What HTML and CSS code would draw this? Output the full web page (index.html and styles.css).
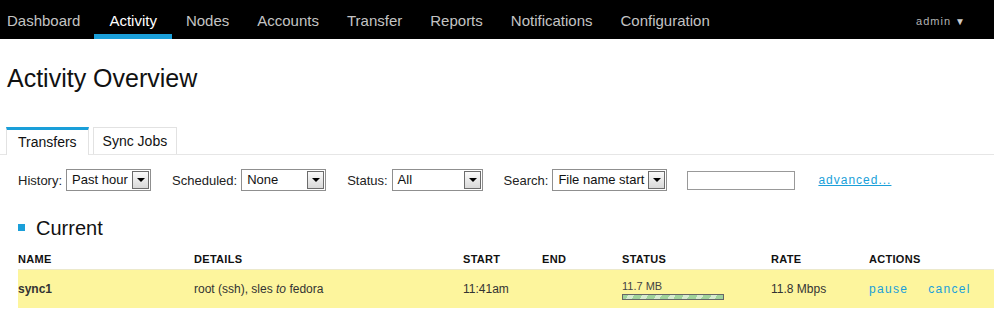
FILE: index.html
```html
<!DOCTYPE html>
<html lang="en">
<head>
  <meta charset="UTF-8" />
  <meta name="viewport" content="width=device-width, initial-scale=1.0"/>
  <title>Activity Overview</title>
  <link rel="stylesheet" href="styles.css">
</head>
<body>

  <div class="topbar">
    <ul class="nav">
      <li><a href="#">Dashboard</a></li>
      <li class="active"><a href="#">Activity</a></li>
      <li><a href="#">Nodes</a></li>
      <li><a href="#">Accounts</a></li>
      <li><a href="#">Transfer</a></li>
      <li><a href="#">Reports</a></li>
      <li><a href="#">Notifications</a></li>
      <li><a href="#">Configuration</a></li>
    </ul>
    <div class="user">admin <span class="caret">▼</span></div>
  </div>

  <h1>Activity Overview</h1>

  <ul class="tabs">
    <li class="active">Transfers</li>
    <li>Sync Jobs</li>
  </ul>

  <div class="filters">
    <label>History:</label>
    <span class="select w-history">Past hour<span class="arrow"></span></span>
    <label>Scheduled:</label>
    <span class="select w-sched">None<span class="arrow"></span></span>
    <label>Status:</label>
    <span class="select w-status">All<span class="arrow"></span></span>
    <label>Search:</label>
    <span class="select w-search">File name start<span class="arrow"></span></span>
    <input class="search-box" type="text">
    <a class="advanced" href="#">advanced...</a>
  </div>

  <h2 class="section-title"><span class="square"></span>Current</h2>

  <table class="transfers">
    <thead>
      <tr>
        <th class="c-name">Name</th>
        <th class="c-details">Details</th>
        <th class="c-start">Start</th>
        <th class="c-end">End</th>
        <th class="c-status">Status</th>
        <th class="c-rate">Rate</th>
        <th class="c-actions">Actions</th>
      </tr>
    </thead>
    <tbody>
      <tr class="running">
        <td class="name">sync1</td>
        <td>root (ssh), sles <em>to</em> fedora</td>
        <td>11:41am</td>
        <td></td>
        <td>
          <div class="size">11.7 MB</div>
          <div class="progress"></div>
        </td>
        <td>11.8 Mbps</td>
        <td class="actions"><a href="#">pause</a><a href="#">cancel</a></td>
      </tr>
    </tbody>
  </table>

</body>
</html>
```

FILE: styles.css
```css
:root {
  --blue: #1a9fd9;
  --text: #222;
  --row: #fdf59d;
}

body {
  margin: 0;
  font-family: 'Liberation Sans', Arial, sans-serif;
  color: var(--text);
  background: #fff;
}

.topbar {
  display: flex;
  justify-content: space-between;
  align-items: center;
  height: 39px;
  background: #000;
}

.nav {
  display: flex;
  list-style: none;
  margin: 0 0 0 -7px;
  padding: 0;
  height: 39px;
}

.nav li {
  box-sizing: border-box;
  height: 39px;
  padding: 0 14px;
  border-bottom: 5px solid transparent;
}

.nav li.active {
  padding: 0 15px;
  border-bottom-color: var(--blue);
}

.nav a {
  display: block;
  line-height: 42px;
  font-size: 15px;
  color: #c4c4c4;
  text-decoration: none;
}

.nav li.active a {
  color: #fff;
}

.user {
  margin-right: 28px;
  padding-top: 2px;
  font-size: 11px;
  letter-spacing: 1px;
  color: #b4b4b4;
}

.user .caret {
  font-size: 10px;
  color: #ccc;
}

h1 {
  margin: 25px 0 0 7px;
  font-size: 25px;
  line-height: 28px;
  font-weight: normal;
  color: #111;
}

.tabs {
  display: flex;
  gap: 4px;
  list-style: none;
  margin: 35px 0 0;
  padding: 0 0 0 6px;
  border-bottom: 1px solid #e6e6e6;
}

.tabs li {
  margin-bottom: -1px;
  padding: 0 9px;
  height: 26px;
  line-height: 26px;
  font-size: 14px;
  color: #111;
  background: #fff;
  border: 1px solid #e2e2e2;
  border-bottom: none;
}

.tabs li.active {
  padding: 0 11px;
  height: 25px;
  border-top: 3px solid var(--blue);
  line-height: 25px;
}

.filters {
  display: flex;
  align-items: center;
  margin: 14px 0 0 18px;
  font-size: 13px;
}

.filters label {
  margin-right: 4px;
}

.select {
  position: relative;
  box-sizing: border-box;
  height: 22px;
  line-height: 19px;
  padding-left: 5px;
  margin-right: 21px;
  border: 1px solid #8f8f8f;
  font-size: 13px;
  color: #111;
  background: #fff;
}

.select .arrow {
  position: absolute;
  top: 1px;
  right: 1px;
  width: 15px;
  height: 16px;
  border: 1px solid #6c6c6c;
  background: linear-gradient(#fafafa, #d9d9d9);
}

.select .arrow::after {
  content: '';
  position: absolute;
  left: 4px;
  top: 6px;
  border-left: 4px solid transparent;
  border-right: 4px solid transparent;
  border-top: 4px solid #000;
}

.w-history { width: 85px; }
.w-sched { width: 85px; }
.w-status { width: 91px; }
.w-search { width: 115px; margin-right: 20px; }

.search-box {
  box-sizing: border-box;
  width: 108px;
  height: 19px;
  margin: 0 23px 0 0;
  padding: 0 3px;
  border: 1px solid #999;
  font-family: inherit;
  font-size: 13px;
}

.advanced {
  font-size: 12px;
  letter-spacing: 1px;
  color: var(--blue);
}

.section-title {
  display: flex;
  align-items: center;
  margin: 26px 0 0 18px;
  font-size: 20px;
  line-height: 22px;
  font-weight: normal;
  color: #111;
}

.section-title .square {
  width: 7px;
  height: 7px;
  margin: 0 11px 1px 0;
  background: var(--blue);
}

.transfers {
  width: calc(100% - 18px);
  margin: 13px 0 0 18px;
  border-collapse: collapse;
  font-size: 12px;
}

.transfers th {
  padding: 0 0 4px;
  height: 13px;
  text-align: left;
  font-size: 11px;
  letter-spacing: 0.3px;
  text-transform: uppercase;
  color: #111;
  border-bottom: 1px solid #ece9cc;
}

.c-name { width: 176px; }
.c-details { width: 269px; }
.c-start { width: 79px; }
.c-end { width: 80px; }
.c-status { width: 149px; }
.c-rate { width: 98px; }

.transfers td {
  height: 38px;
  padding: 0;
  color: #333;
  vertical-align: middle;
}

.transfers tr.running td {
  background: var(--row);
}

.transfers td.name {
  font-weight: bold;
}

.size {
  font-size: 11px;
  line-height: 11px;
  margin-top: 3px;
  color: #444;
}

.progress {
  box-sizing: border-box;
  width: 102px;
  height: 6px;
  margin-top: 2px;
  border: 1px solid #666;
  background: repeating-linear-gradient(-60deg, #9fd29a 0 7px, #d6ebcf 7px 12px);
}

.actions a {
  margin-right: 20px;
  letter-spacing: 1.3px;
  color: var(--blue);
  text-decoration: none;
}
```
